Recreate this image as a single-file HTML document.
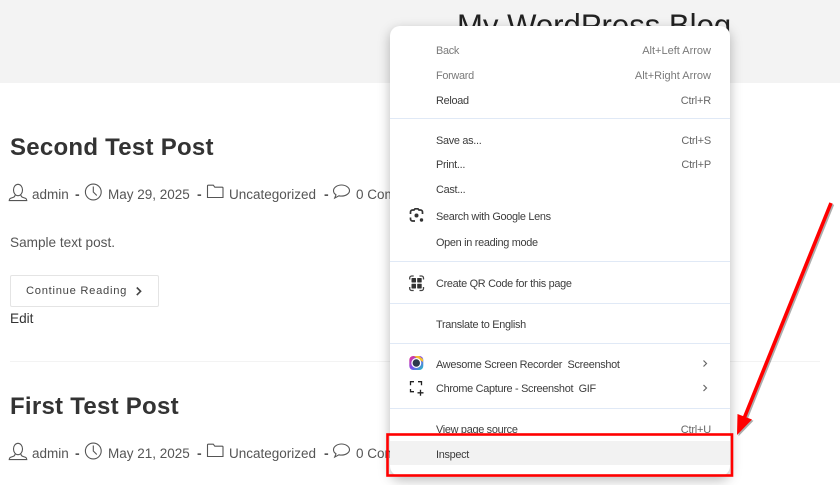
<!DOCTYPE html>
<html><head><meta charset="utf-8"><style>
html,body{margin:0;padding:0;background:#fff}
body{width:840px;height:485px;overflow:hidden;position:relative;font-family:"Liberation Sans",sans-serif}
.t{position:absolute;white-space:nowrap;line-height:20px;height:20px}
.h{font-weight:700;font-size:24px;letter-spacing:.26px;color:#333;line-height:30px;height:30px}
.m{font-size:13.5px;color:#555}
.d{font-size:14px;color:#555;font-weight:700}
.i{font-size:10.9px;letter-spacing:-.3px;color:#3c3c3c;line-height:16px;height:16px}
.s{font-size:11px;letter-spacing:0;color:#666;line-height:16px;height:16px;right:129px}
.g{color:#7a7a7a}
.sep{position:absolute;left:390px;width:340px;height:1px;background:#e0e9f6}
svg{position:absolute;left:0;top:0;overflow:visible}
</style></head><body>
<div style="position:absolute;left:0;top:0;width:840px;height:83px;background:#f3f3f3"></div>
<div class="t" style="left:457px;top:6px;font-size:31.1px;line-height:40px;height:40px;color:#222">My WordPress Blog</div>

<div class="t h" style="left:10px;top:133px">Second Test Post</div>
<div class="t m" style="left:32px;top:185px">admin</div>
<div class="t d" style="left:75px;top:184px">-</div>
<div class="t m" style="left:108px;top:185px">May 29, 2025</div>
<div class="t d" style="left:197px;top:184px">-</div>
<div class="t m" style="left:229px;top:185px">Uncategorized</div>
<div class="t d" style="left:324px;top:184px">-</div>
<div class="t m" style="left:356px;top:185px">0 Comments</div>
<div class="t" style="left:10px;top:233px;font-size:13.6px;color:#555">Sample text post.</div>
<div style="position:absolute;left:10px;top:275px;width:147px;height:30px;border:1px solid #e4e4e4;border-radius:2px"></div>
<div class="t" style="left:26px;top:281px;font-size:11.2px;letter-spacing:.72px;color:#444">Continue Reading</div>
<div class="t" style="left:10px;top:309px;font-size:13.6px;color:#333">Edit</div>
<div style="position:absolute;left:10px;top:361px;width:810px;height:1px;background:#f3f3f3"></div>

<div class="t h" style="left:10px;top:392px">First Test Post</div>
<div class="t m" style="left:32px;top:444px">admin</div>
<div class="t d" style="left:75px;top:443px">-</div>
<div class="t m" style="left:108px;top:444px">May 21, 2025</div>
<div class="t d" style="left:197px;top:443px">-</div>
<div class="t m" style="left:229px;top:444px">Uncategorized</div>
<div class="t d" style="left:324px;top:443px">-</div>
<div class="t m" style="left:356px;top:444px">0 Comments</div>

<svg width="840" height="485" fill="none" stroke="#555" stroke-width="1.100">
<g>
<ellipse cx="18" cy="190" rx="4.500" ry="5.700"/><path d="M15 195c0 1.500-.5 2-2.500 2.600-2 .6-3.300 1-3.300 3h17.600c0-2-1.300-2.400-3.300-3-2-.6-2.500-1.100-2.500-2.600"/>
<circle cx="93.300" cy="192" r="7.900"/><path d="M93.300 186.500v5.500l3.500 3.500"/>
<path d="M207.500 197.500v-11.500a.8.800 0 0 1 .8-.8h5l1.500 2h7.400a.8.800 0 0 1 .8.800v9.500z"/>
<path d="M341.500 185c-4.300 0-8 2.500-8 5.800 0 1.700 1 3.100 2.500 4l-1.300 3.300 4.200-2.300c.8.200 1.700.3 2.600.3 4.300 0 8-2.500 8-5.300 0-3.300-3.700-5.800-8-5.800z"/>
</g>
<g transform="translate(0 259)">
<ellipse cx="18" cy="190" rx="4.500" ry="5.700"/><path d="M15 195c0 1.500-.5 2-2.500 2.600-2 .6-3.300 1-3.300 3h17.600c0-2-1.300-2.400-3.300-3-2-.6-2.500-1.100-2.500-2.600"/>
<circle cx="93.300" cy="192" r="7.900"/><path d="M93.300 186.500v5.500l3.500 3.500"/>
<path d="M207.500 197.500v-11.500a.8.800 0 0 1 .8-.8h5l1.500 2h7.400a.8.800 0 0 1 .8.800v9.500z"/>
<path d="M341.500 185c-4.300 0-8 2.500-8 5.800 0 1.700 1 3.100 2.500 4l-1.300 3.300 4.200-2.300c.8.200 1.700.3 2.600.3 4.300 0 8-2.500 8-5.300 0-3.300-3.700-5.800-8-5.800z"/>
</g>
<path d="M136.800 287.500l3.800 3.800-3.800 3.800" stroke="#444" stroke-width="1.600"/>
</svg>

<div style="position:absolute;left:390px;top:26px;width:340px;height:450px;background:#fff;border-radius:10px;box-shadow:0 4px 12px rgba(0,0,0,.28)"></div>
<div style="position:absolute;left:390px;top:441px;width:340px;height:24px;background:#f2f2f2"></div>
<div class="sep" style="top:118px"></div>
<div class="sep" style="top:261px"></div>
<div class="sep" style="top:303px"></div>
<div class="sep" style="top:343px"></div>
<div class="sep" style="top:408px"></div>

<div class="t i g" style="left:436px;top:43px">Back</div>
<div class="t i g" style="left:436px;top:68px">Forward</div>
<div class="t i" style="left:436px;top:93px">Reload</div>
<div class="t i" style="left:436px;top:133px">Save as...</div>
<div class="t i" style="left:436px;top:157px">Print...</div>
<div class="t i" style="left:436px;top:182px">Cast...</div>
<div class="t i" style="left:436px;top:209px">Search with Google Lens</div>
<div class="t i" style="left:436px;top:235px">Open in reading mode</div>
<div class="t i" style="left:436px;top:276px">Create QR Code for this page</div>
<div class="t i" style="left:436px;top:317px">Translate to English</div>
<div class="t i" style="left:436px;top:357px">Awesome Screen Recorder&nbsp; Screenshot</div>
<div class="t i" style="left:436px;top:381px">Chrome Capture - Screenshot&nbsp; GIF</div>
<div class="t i" style="left:436px;top:422px">View page source</div>
<div class="t i" style="left:436px;top:447px">Inspect</div>

<div class="t s g" style="top:43px">Alt+Left Arrow</div>
<div class="t s g" style="top:68px">Alt+Right Arrow</div>
<div class="t s" style="top:93px;letter-spacing:-.2px">Ctrl+R</div>
<div class="t s" style="top:133px;letter-spacing:-.2px">Ctrl+S</div>
<div class="t s" style="top:157px;letter-spacing:-.2px">Ctrl+P</div>
<div class="t s" style="top:422px;letter-spacing:-.2px">Ctrl+U</div>

<svg width="840" height="485" fill="none">
<!-- lens -->
<g stroke="#333" stroke-width="1.700">
<path d="M410.500 214v-2a2 2 0 0 1 2-2h1.500l1-1.200h3l1 1.200h1.500a2 2 0 0 1 2 2v2M410.500 217.500v1.500a2 2 0 0 0 2 2h2.500"/>
</g>
<circle cx="416.500" cy="215.500" r="2" fill="#333"/>
<circle cx="421.500" cy="220" r="1.700" fill="#333"/>
<!-- qr -->
<g stroke="#444" stroke-width="1.300">
<path d="M409.700 279.500v-1.500a2 2 0 0 1 2-2h2M419.500 276h2a2 2 0 0 1 2 2v1.500M409.700 287v1.500a2 2 0 0 0 2 2h2M419.500 290.500h2a2 2 0 0 0 2-2V287"/>
</g>
<g fill="#333"><rect x="411.500" y="278" width="4.500" height="4.500" rx=".6"/><rect x="417.200" y="278" width="4.500" height="4.500" rx=".6"/><rect x="411.500" y="283.700" width="4.500" height="4.800" rx=".6"/><rect x="417.200" y="283.700" width="4.500" height="4.800" rx=".6"/></g>
<!-- awesome -->
<defs><linearGradient id="ag" x1="0" y1="0" x2="1" y2="1"><stop offset="0" stop-color="#f0308a"/><stop offset=".5" stop-color="#7a4df0"/><stop offset="1" stop-color="#20c8c0"/></linearGradient></defs>
<rect x="409.300" y="356" width="14" height="14" rx="4" fill="url(#ag)"/>
<path d="M414 356h5l4 3v3l-5-3z" fill="#f5c030"/>
<circle cx="416.300" cy="363" r="5" fill="#fff"/><circle cx="416.300" cy="363" r="3.700" fill="#2c3a4c"/>
<!-- capture -->
<path d="M414 381.700h-3.500v3.500M418 381.700h3.500v3.500M410.500 389v2.700h3.500M417.500 392.800h6M420.500 389.800v6" stroke="#222" stroke-width="1.300"/>
<!-- chevrons -->
<path d="M703.500 360.500l3 3-3 3M703.500 385l3 3-3 3" stroke="#666" stroke-width="1.200"/>
<!-- red box -->
<rect x="387.500" y="434.500" width="344.500" height="41" stroke="#f00" stroke-width="2.600"/>
<!-- arrow shadow -->
<g opacity=".4" transform="translate(1.500 1.200)"><path d="M831 203L743 421" stroke="#333" stroke-width="3.600"/><path d="M737 435L737.500 414 752 419.500z" fill="#333"/></g>
<path d="M831 203L743 421" stroke="#f00" stroke-width="3.600"/>
<path d="M737 435L737.500 414 752 419.500z" fill="#f00"/>
</svg>
</body></html>
